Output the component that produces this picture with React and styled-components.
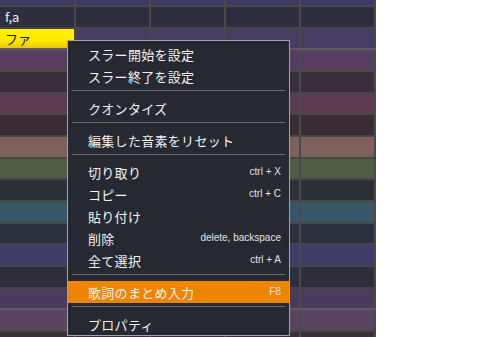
import React from "react";
import styled, { createGlobalStyle } from "styled-components";

const GlobalStyle = createGlobalStyle`
  html, body { margin: 0; padding: 0; background: #ffffff; }
  body { font-family: "Noto Sans CJK JP", "Liberation Sans", sans-serif; overflow: hidden; }
`;

const Stage = styled.div`
  position: relative;
  width: 498px;
  height: 337px;
  overflow: hidden;
`;

const Grid = styled.div`
  display: flex;
  flex-direction: column;
  width: 376px;
`;

const Row = styled.div`
  display: flex;
  box-sizing: border-box;
  height: ${(p) => p.$h}px;
  background: ${(p) => p.$bg};
  border-bottom: 2px solid ${(p) => (p.$strong ? "#5e5e5e" : "#474747")};
`;

const Cell = styled.div`
  box-sizing: border-box;
  width: ${(p) => (p.$first ? 76 : 75)}px;
  height: 100%;
  border-right: 2px solid #4a4a4a;
  display: flex;
  align-items: center;
  padding-left: 5px;
  font-family: "Noto Sans CJK JP", "Liberation Sans", sans-serif;
  font-size: 13px;
  color: ${(p) => (p.$selected ? "#111111" : "#f2f2f2")};
  background: ${(p) =>
    p.$selected ? "linear-gradient(#fff400 0%, #ffe800 60%, #e9c800 100%)" : "transparent"};
`;

const Menu = styled.div`
  position: absolute;
  left: 67px;
  top: 40px;
  width: 223px;
  box-sizing: border-box;
  background: #272932;
  border: 1px solid #a3a3a3;
  padding: 2px 0 0 0;
  display: flex;
  flex-direction: column;
`;

const Item = styled.div`
  height: 22px;
  display: flex;
  align-items: center;
  justify-content: space-between;
  padding: 0 8px 0 20px;
  background: ${(p) => (p.$active ? "#ee8500" : "transparent")};
`;

const Label = styled.span`
  font-family: "Noto Sans CJK JP", sans-serif;
  font-size: 13px;
  letter-spacing: 0.3px;
  color: #f2f2f2;
  line-height: 1;
`;

const Shortcut = styled.span`
  font-family: "Liberation Sans", "DejaVu Sans", sans-serif;
  font-size: 10px;
  color: #e2e2e2;
  line-height: 1;
`;

const Separator = styled.div`
  height: 1px;
  margin: 3px 4px 6px 4px;
  background: #6c6c6c;
`;

const ROW = 65 / 3;
const rows = [
  { h: 7, bg: "#3d3a62" },
  { h: ROW, bg: "#2e2e3e", lyric: "f,a" },
  { h: ROW, bg: "#483c62", lyric: "ファ", selected: true, strong: true },
  { h: ROW, bg: "#553e5f" },
  { h: ROW, bg: "#3a2e3d" },
  { h: ROW, bg: "#5d3a4d" },
  { h: ROW, bg: "#392c35" },
  { h: ROW, bg: "#7e615d" },
  { h: ROW, bg: "#4e5c41" },
  { h: ROW, bg: "#2c3139" },
  { h: ROW, bg: "#385869" },
  { h: ROW, bg: "#2c3141" },
  { h: ROW, bg: "#3f3d68" },
  { h: ROW, bg: "#2e2e3c" },
  { h: ROW, bg: "#4a3b5e", strong: true },
  { h: ROW, bg: "#5a4461" },
  { h: 10, bg: "#3a2e3a" },
];

const menu = [
  { label: "スラー開始を設定" },
  { label: "スラー終了を設定" },
  { sep: true },
  { label: "クオンタイズ" },
  { sep: true },
  { label: "編集した音素をリセット" },
  { sep: true },
  { label: "切り取り", key: "ctrl + X" },
  { label: "コピー", key: "ctrl + C" },
  { label: "貼り付け" },
  { label: "削除", key: "delete, backspace" },
  { label: "全て選択", key: "ctrl + A" },
  { sep: true },
  { label: "歌詞のまとめ入力", key: "F8", active: true },
  { sep: true },
  { label: "プロパティ" },
];

export default function App() {
  return (
    <Stage>
      <GlobalStyle />
      <Grid>
        {rows.map((r, i) => (
          <Row key={i} $h={r.h} $bg={r.bg} $strong={r.strong}>
            <Cell $first $selected={r.selected}>{r.lyric || ""}</Cell>
            <Cell />
            <Cell />
            <Cell />
            <Cell />
          </Row>
        ))}
      </Grid>
      <Menu>
        {menu.map((m, i) =>
          m.sep ? (
            <Separator key={i} />
          ) : (
            <Item key={i} $active={m.active}>
              <Label>{m.label}</Label>
              {m.key && <Shortcut>{m.key}</Shortcut>}
            </Item>
          )
        )}
      </Menu>
    </Stage>
  );
}
